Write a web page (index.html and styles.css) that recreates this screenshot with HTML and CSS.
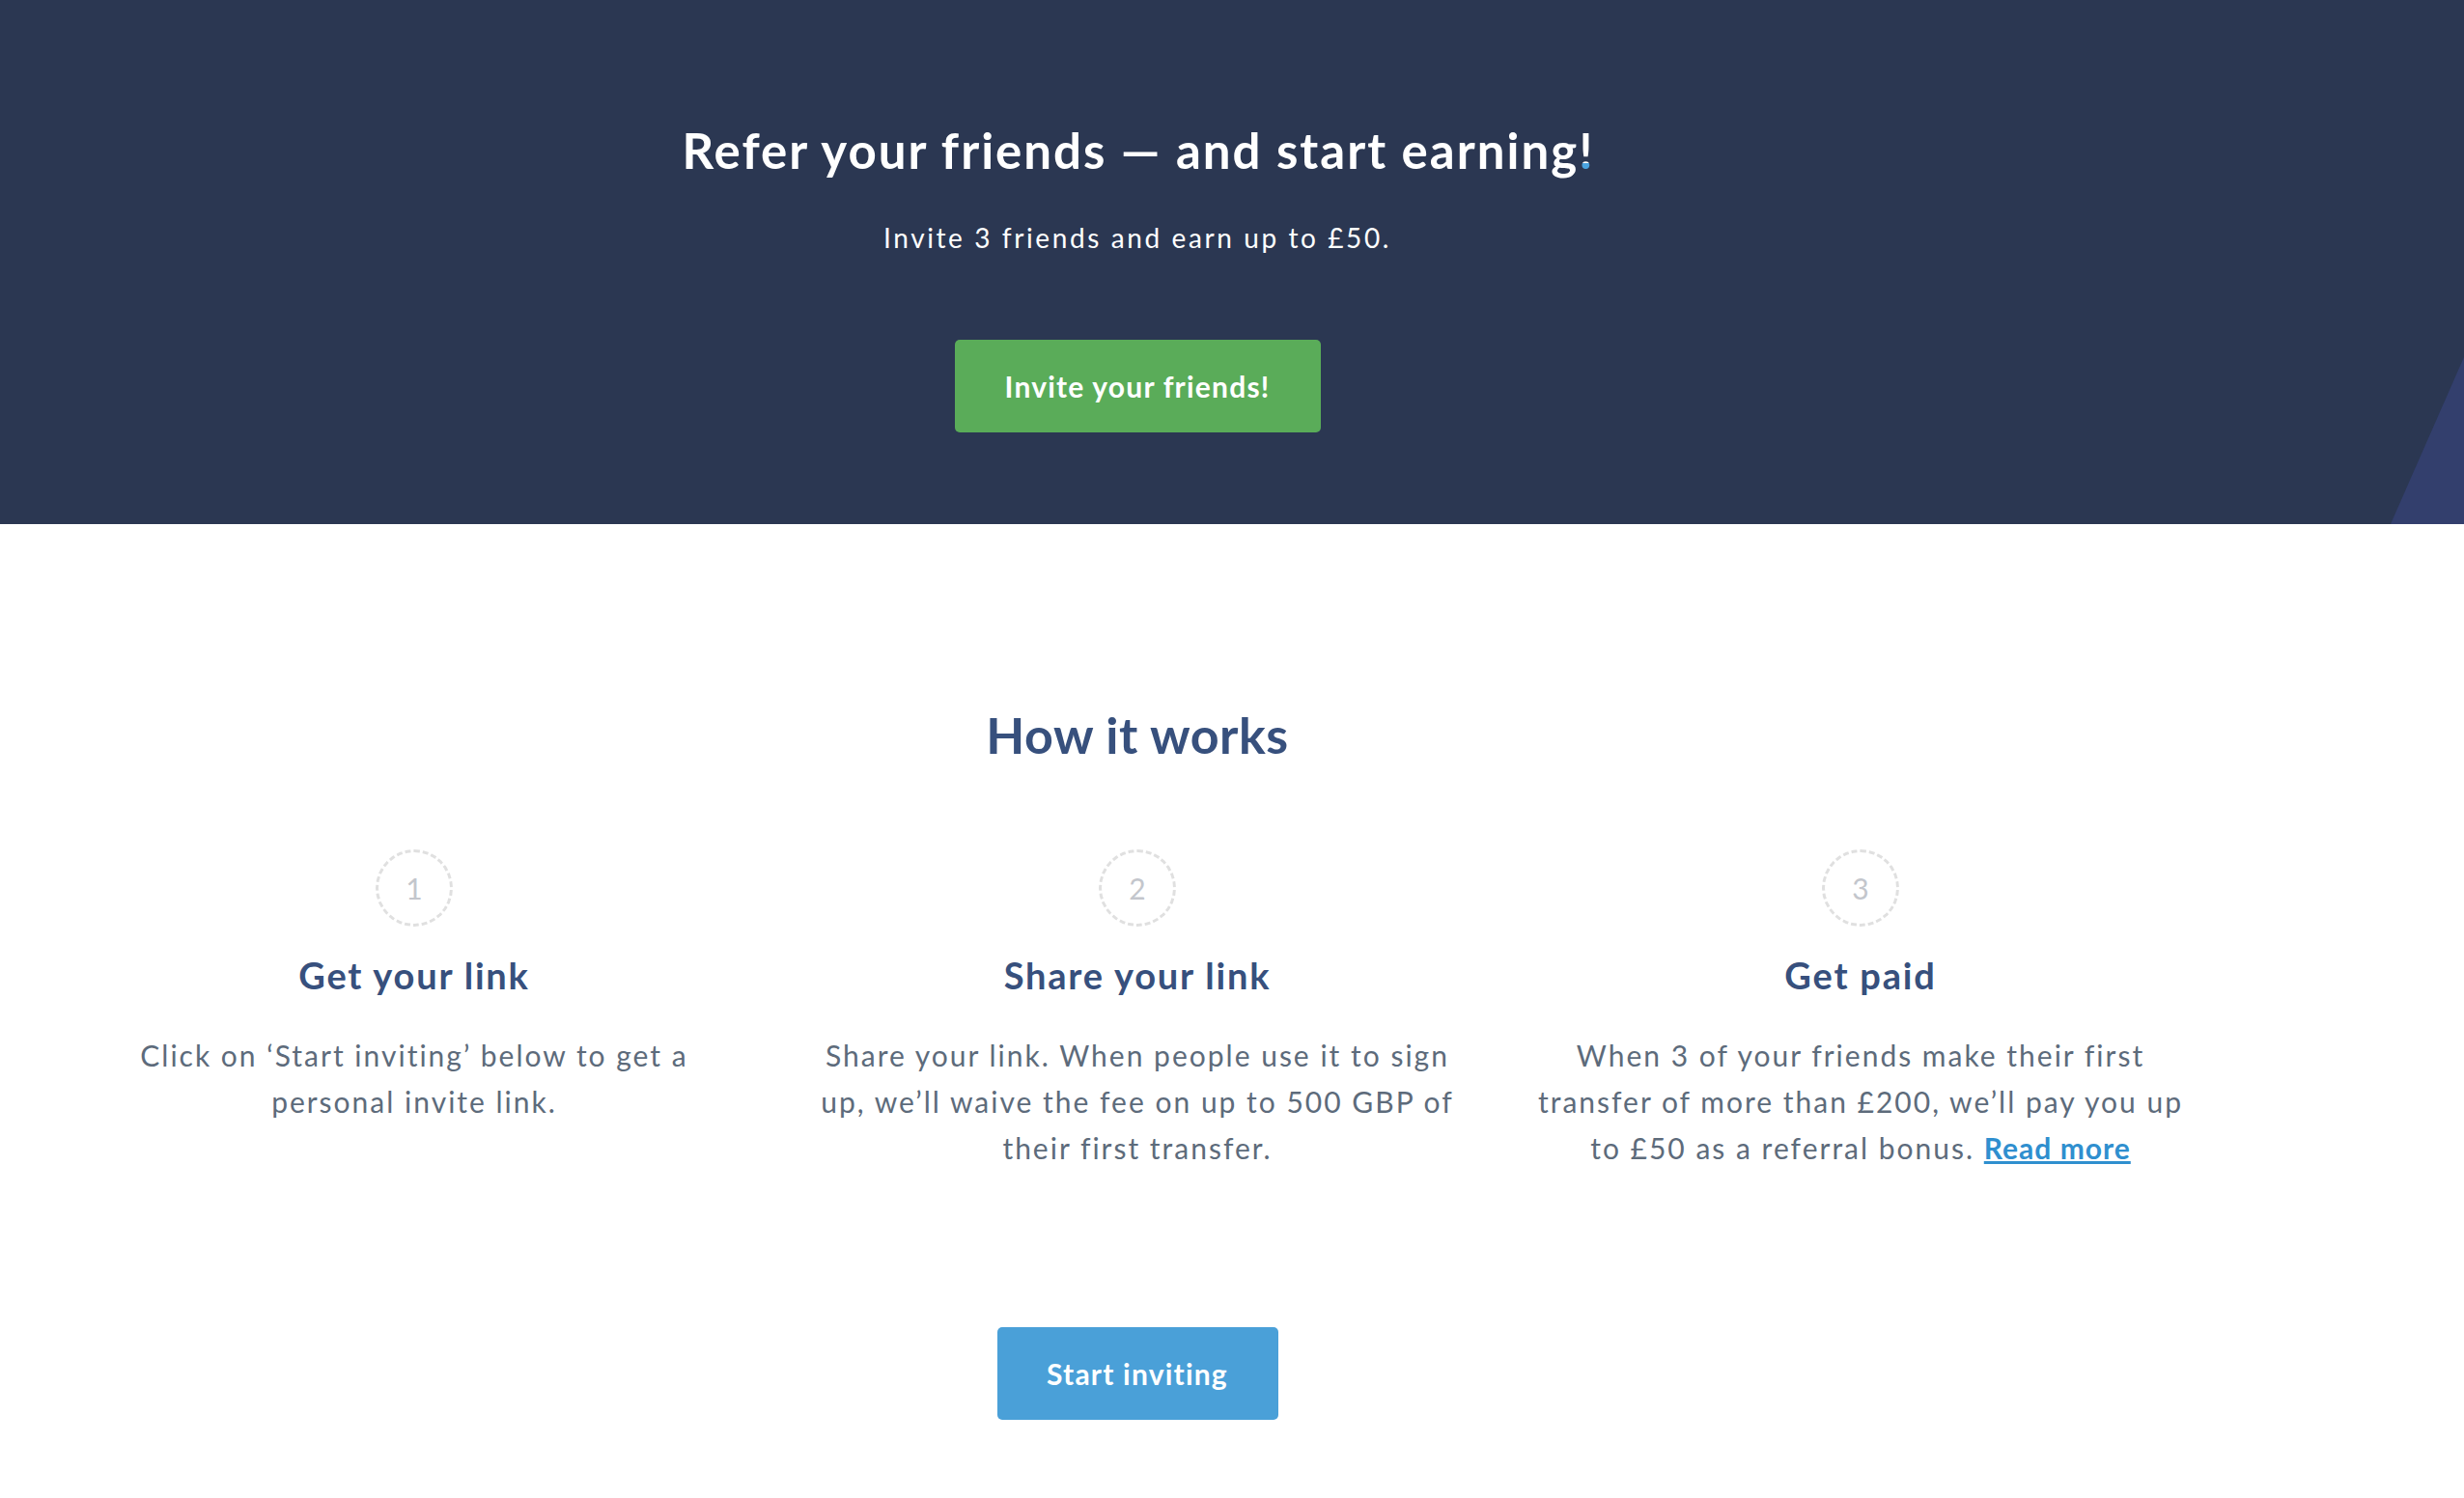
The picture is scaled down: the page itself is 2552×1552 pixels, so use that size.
FILE: index.html
```html
<!DOCTYPE html>
<html lang="en">
<head>
  <meta charset="UTF-8" />
  <title>Refer your friends</title>
  <link rel="stylesheet" href="styles.css">
</head>
<body>
  <header class="hero">
    <div class="hero-inner">
      <h1 class="hero-title">Refer your friends — and start earning<span class="bang">!</span></h1>
      <p class="hero-sub">Invite 3 friends and earn up to £50.</p>
      <a href="#" class="btn btn-green">Invite your friends!</a>
    </div>
  </header>

  <main class="how">
    <h2 class="how-title">How it works</h2>

    <div class="steps">
      <div class="step">
        <div class="step-num">1</div>
        <h3>Get your link</h3>
        <p>Click on ‘Start inviting’ below to get a<br>personal invite link.</p>
      </div>
      <div class="step">
        <div class="step-num">2</div>
        <h3>Share your link</h3>
        <p>Share your link. When people use it to sign<br>up, we’ll waive the fee on up to 500 GBP of<br>their first transfer.</p>
      </div>
      <div class="step">
        <div class="step-num">3</div>
        <h3>Get paid</h3>
        <p>When 3 of your friends make their first<br>transfer of more than £200, we’ll pay you up<br>to £50 as a referral bonus. <a href="#">Read more</a></p>
      </div>
    </div>

    <div class="how-cta">
      <a href="#" class="btn btn-blue">Start inviting</a>
    </div>
  </main>
</body>
</html>
```

FILE: styles.css
```css
body {
  font-family: Lato, 'Open Sans', sans-serif;
  margin: 0;
  background: #fff;
  color: #5d6b7b;
}

.hero {
  position: relative;
  background: #2b3752;
  height: 543px;
  overflow: hidden;
}

/* lighter slanted corner on the right */
.hero::after {
  content: "";
  position: absolute;
  right: 0;
  bottom: 0;
  width: 76px;
  height: 173px;
  background: #333f6d;
  clip-path: polygon(100% 0, 100% 100%, 0 100%);
}

.hero-inner {
  width: 2356px;
  padding-top: 126px;
  display: flex;
  flex-direction: column;
  align-items: center;
}

.hero-title {
  margin: 0 0 40px;
  font-size: 51px;
  line-height: 60px;
  font-weight: 700;
  letter-spacing: 2px;
  color: #fff;
}

.bang {
  letter-spacing: 0;
  background: linear-gradient(to bottom, #fff 72%, #4aa3e0 72%);
  -webkit-background-clip: text;
  background-clip: text;
  color: transparent;
}

.hero-sub {
  margin: 0 0 86px;
  font-size: 28px;
  line-height: 40px;
  letter-spacing: 2.6px;
  color: #fff;
}

.btn {
  display: inline-flex;
  align-items: center;
  justify-content: center;
  height: 96px;
  box-sizing: border-box;
  border-radius: 5px;
  color: #fff;
  font-size: 30px;
  font-weight: 700;
  letter-spacing: 1.2px;
  text-decoration: none;
}

.btn-green {
  background: #5aac59;
  width: 379px;
}

.btn-blue {
  background: #4aa0d8;
  width: 291px;
}

.how {
  width: 2356px;
  padding-top: 187px;
  text-align: center;
}

.how-title {
  margin: 0 0 88px;
  font-size: 52px;
  line-height: 62px;
  font-weight: 700;
  letter-spacing: 0.5px;
  color: #37507d;
}

.steps {
  display: grid;
  grid-template-columns: repeat(3, 700px);
  column-gap: 49px;
  justify-content: center;
}

.step {
  display: flex;
  flex-direction: column;
  align-items: center;
}

.step-num {
  width: 80px;
  height: 80px;
  box-sizing: border-box;
  border: 3px dashed #e0e0e0;
  border-radius: 50%;
  display: flex;
  align-items: center;
  justify-content: center;
  font-size: 30px;
  font-weight: 400;
  color: #c3c6cc;
}

.step h3 {
  margin: 27px 0 36px;
  font-size: 38px;
  line-height: 46px;
  font-weight: 700;
  letter-spacing: 1.8px;
  color: #37507d;
}

.step p {
  margin: 0;
  font-size: 30px;
  line-height: 48px;
  letter-spacing: 2px;
}

.step p a {
  color: #2f8fcf;
  font-weight: 700;
  letter-spacing: 1px;
  text-decoration: underline;
}

.how-cta {
  padding: 162px 0 81px;
}
```
